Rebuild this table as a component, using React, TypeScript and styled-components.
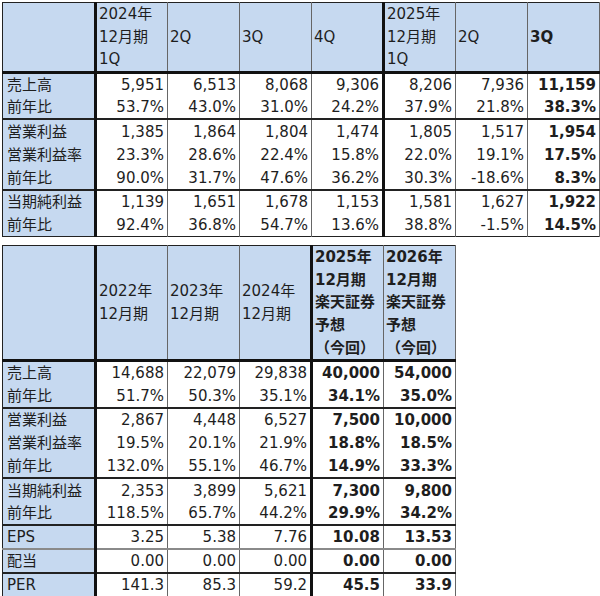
import React from "react";
import styled, { createGlobalStyle } from "styled-components";

const GlobalStyle = createGlobalStyle`
  html, body { margin: 0; padding: 0; background: #ffffff; }
  body {
    font-family: "DejaVu Sans", "Noto Sans CJK JP", sans-serif;
    color: #1e1e1e;
  }
`;

const BLUE = "#c6d9f0";
const THICK = "3px solid #111";
const GROUP = "2px solid #222";
const THIN = "1px solid #666";

const Page = styled.div`
  display: flex;
  flex-direction: column;
  align-items: flex-start;
  gap: 8px;
  padding: 2px 0 0 2px;
`;

const Sheet = styled.table`
  border-collapse: collapse;
  table-layout: fixed;
  font-size: 15px;
  border: 1px solid #222;
`;

const LabelCol = styled.col`
  width: 93px;
`;

const DataCol = styled.col`
  width: 72px;
`;

const HeadRow = styled.tr`
  border-bottom: ${THICK};
`;

const HeadCell = styled.th<{ $bold?: boolean; $thickRight?: boolean }>`
  background: ${BLUE};
  text-align: left;
  vertical-align: middle;
  font-weight: ${(p) => (p.$bold ? 700 : 400)};
  line-height: 22.6px;
  padding: 0 0 0 2px;
  white-space: pre-line;
  border-left: ${THIN};
  border-right: ${(p) => (p.$thickRight ? THICK : THIN)};
`;

const CornerCell = styled.th`
  background: ${BLUE};
  border-right: ${THICK};
  padding: 0;
`;

const DataRow = styled.tr<{ $sep?: "group" | "gray" | "none" }>`
  height: 23.5px;
  border-top: ${(p) =>
    p.$sep === "group" ? GROUP : p.$sep === "gray" ? "2px solid #8a8a8a" : "none"};
`;

const LabelCell = styled.td`
  background: ${BLUE};
  text-align: left;
  padding: 0 0 0 4px;
  line-height: 22px;
  white-space: nowrap;
  border-right: ${THICK};
  vertical-align: middle;
`;

const ValueCell = styled.td<{ $bold?: boolean; $thickRight?: boolean }>`
  background: #ffffff;
  text-align: right;
  padding: 0 3px 0 0;
  line-height: 22px;
  white-space: nowrap;
  font-weight: ${(p) => (p.$bold ? 700 : 400)};
  border-left: ${THIN};
  border-right: ${(p) => (p.$thickRight ? THICK : THIN)};
  vertical-align: middle;
`;

type Row = { label: string; values: string[] };
type Group = { rows: Row[]; sep?: "group" | "gray" };

type SheetSpec = {
  headers: { text: string; bold?: boolean }[];
  thickAfter: number;
  boldFrom: number;
  groups: Group[];
};

const sheet1: SheetSpec = {
  headers: [
    { text: "2024年\n12月期\n1Q" },
    { text: "2Q" },
    { text: "3Q" },
    { text: "4Q" },
    { text: "2025年\n12月期\n1Q" },
    { text: "2Q" },
    { text: "3Q", bold: true },
  ],
  thickAfter: 3,
  boldFrom: 6,
  groups: [
    {
      rows: [
        { label: "売上高", values: ["5,951", "6,513", "8,068", "9,306", "8,206", "7,936", "11,159"] },
        { label: "前年比", values: ["53.7%", "43.0%", "31.0%", "24.2%", "37.9%", "21.8%", "38.3%"] },
      ],
    },
    {
      sep: "group",
      rows: [
        { label: "営業利益", values: ["1,385", "1,864", "1,804", "1,474", "1,805", "1,517", "1,954"] },
        { label: "営業利益率", values: ["23.3%", "28.6%", "22.4%", "15.8%", "22.0%", "19.1%", "17.5%"] },
        { label: "前年比", values: ["90.0%", "31.7%", "47.6%", "36.2%", "30.3%", "-18.6%", "8.3%"] },
      ],
    },
    {
      sep: "group",
      rows: [
        { label: "当期純利益", values: ["1,139", "1,651", "1,678", "1,153", "1,581", "1,627", "1,922"] },
        { label: "前年比", values: ["92.4%", "36.8%", "54.7%", "13.6%", "38.8%", "-1.5%", "14.5%"] },
      ],
    },
  ],
};

const sheet2: SheetSpec = {
  headers: [
    { text: "2022年\n12月期" },
    { text: "2023年\n12月期" },
    { text: "2024年\n12月期" },
    { text: "2025年\n12月期\n楽天証券\n予想\n（今回）", bold: true },
    { text: "2026年\n12月期\n楽天証券\n予想\n（今回）", bold: true },
  ],
  thickAfter: 2,
  boldFrom: 3,
  groups: [
    {
      rows: [
        { label: "売上高", values: ["14,688", "22,079", "29,838", "40,000", "54,000"] },
        { label: "前年比", values: ["51.7%", "50.3%", "35.1%", "34.1%", "35.0%"] },
      ],
    },
    {
      sep: "group",
      rows: [
        { label: "営業利益", values: ["2,867", "4,448", "6,527", "7,500", "10,000"] },
        { label: "営業利益率", values: ["19.5%", "20.1%", "21.9%", "18.8%", "18.5%"] },
        { label: "前年比", values: ["132.0%", "55.1%", "46.7%", "14.9%", "33.3%"] },
      ],
    },
    {
      sep: "group",
      rows: [
        { label: "当期純利益", values: ["2,353", "3,899", "5,621", "7,300", "9,800"] },
        { label: "前年比", values: ["118.5%", "65.7%", "44.2%", "29.9%", "34.2%"] },
      ],
    },
    { sep: "group", rows: [{ label: "EPS", values: ["3.25", "5.38", "7.76", "10.08", "13.53"] }] },
    { sep: "gray", rows: [{ label: "配当", values: ["0.00", "0.00", "0.00", "0.00", "0.00"] }] },
    { sep: "group", rows: [{ label: "PER", values: ["141.3", "85.3", "59.2", "45.5", "33.9"] }] },
  ],
};

function FinanceSheet({ spec }: { spec: SheetSpec }) {
  return (
    <Sheet>
      <colgroup>
        <LabelCol />
        {spec.headers.map((_, i) => (
          <DataCol key={i} />
        ))}
      </colgroup>
      <thead>
        <HeadRow>
          <CornerCell />
          {spec.headers.map((h, i) => (
            <HeadCell key={i} $bold={h.bold} $thickRight={i === spec.thickAfter}>
              {h.text}
            </HeadCell>
          ))}
        </HeadRow>
      </thead>
      <tbody>
        {spec.groups.map((g, gi) =>
          g.rows.map((r, ri) => (
            <DataRow key={`${gi}-${ri}`} $sep={ri === 0 ? g.sep : "none"}>
              <LabelCell>{r.label}</LabelCell>
              {r.values.map((v, vi) => (
                <ValueCell key={vi} $bold={vi >= spec.boldFrom} $thickRight={vi === spec.thickAfter}>
                  {v}
                </ValueCell>
              ))}
            </DataRow>
          ))
        )}
      </tbody>
    </Sheet>
  );
}

export default function App() {
  return (
    <>
      <GlobalStyle />
      <Page>
        <FinanceSheet spec={sheet1} />
        <FinanceSheet spec={sheet2} />
      </Page>
    </>
  );
}
